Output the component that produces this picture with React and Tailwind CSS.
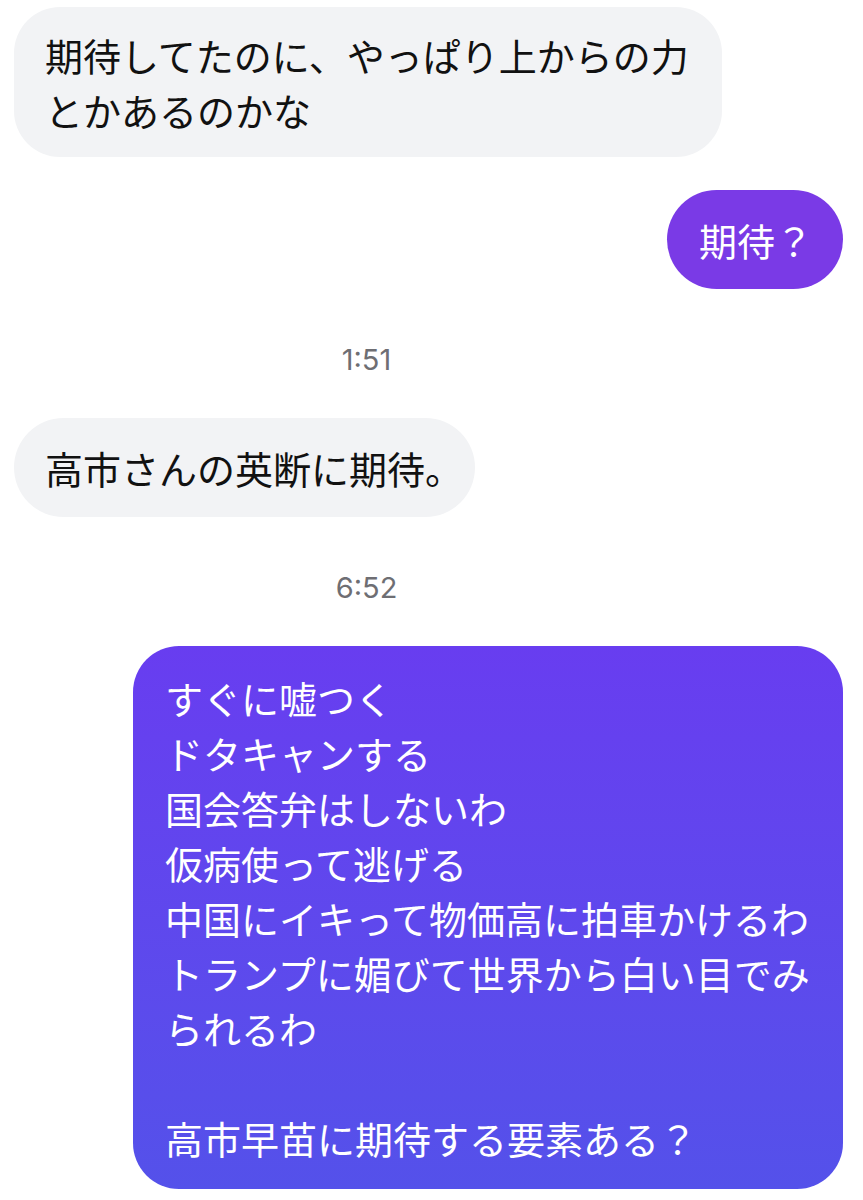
import React from 'react';

const incoming = 'bg-[#f2f3f5] text-[#111111]';

function Stamp({ time, className }) {
  return (
    <div className={`w-[733px] flex justify-center leading-[40px] text-[29px] text-[#6e6e73] font-['Inter',sans-serif] ${className}`}>
      {time}
    </div>
  );
}

export default function App() {
  const lines = [
    'すぐに嘘つく',
    'ドタキャンする',
    '国会答弁はしないわ',
    '仮病使って逃げる',
    '中国にイキって物価高に拍車かけるわ',
    'トランプに媚びて世界から白い目でみられるわ',
    '',
    '高市早苗に期待する要素ある？',
  ];

  return (
    <div className="w-[863px] h-[1200px] bg-white overflow-hidden font-['Noto_Sans_CJK_JP','Noto_Sans',sans-serif] text-[38px] leading-[55px] pt-[7px] flex flex-col">
      {/* received */}
      <div className={`ml-[14px] w-[708px] rounded-[46px] px-[31px] py-[20px] ${incoming}`}>
        期待してたのに、やっぱり上からの力とかあるのかな
      </div>

      {/* sent */}
      <div className="self-end mr-[20px] mt-[33px] w-fit rounded-full bg-[#7a3ae6] text-white pl-[32px] pr-[30px] py-[22px]">
        期待？
      </div>

      <Stamp time="1:51" className="mt-[51px]" />

      <div className={`ml-[14px] mt-[38px] w-fit rounded-full pl-[31px] pr-[12px] py-[22px] ${incoming}`}>
        高市さんの英断に期待。
      </div>

      <Stamp time="6:52" className="mt-[51px]" />

      <div className="self-end mr-[20px] mt-[38px] w-[710px] rounded-[46px] bg-gradient-to-b from-[#683df0] to-[#5451ea] text-white px-[32px] py-[24px]">
        {lines.map((line, i) => (
          <div key={i} className="min-h-[55px]">{line}</div>
        ))}
      </div>
    </div>
  );
}
